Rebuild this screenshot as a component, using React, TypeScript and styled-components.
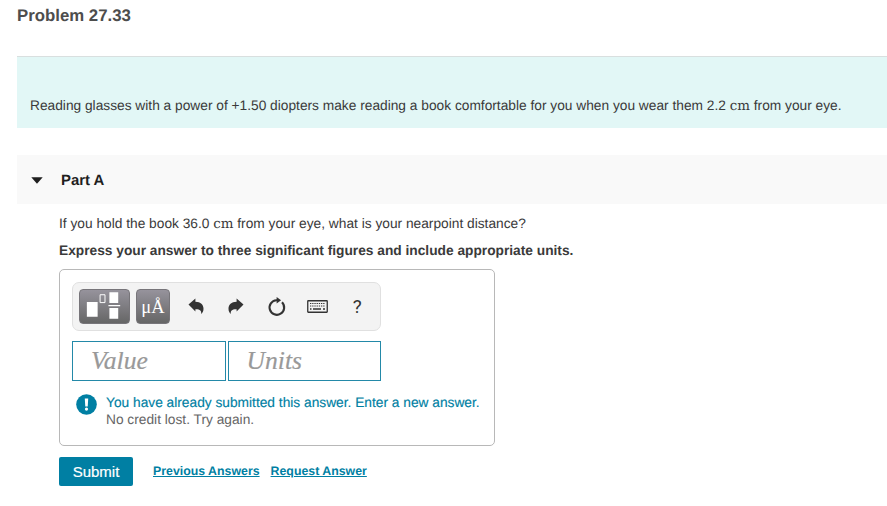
import React, {useState} from 'react';
import styled, {createGlobalStyle} from "styled-components";


//styles
const GlobalStyle = createGlobalStyle`
  * {
    box-sizing: border-box;
  }

  body {
    margin: 0;
    background: white;
    color: #3a3a3a;
    font-family: "Liberation Sans", Arial, sans-serif;
    font-size: 13.74px;
    text-rendering: geometricPrecision;
    overflow: hidden;
  }
`
const Page = styled.main`
  height: 506px;
  padding-left: 17px;
  overflow: hidden;
  white-space: nowrap;
`
const Title = styled.h1`
  margin: 0;
  height: 56px;
  padding-top: 6px;
  font-size: 16.8px;
  line-height: 20px;
  color: #4d4d4d;
`
const Intro = styled.section`
  height: 72px;
  padding: 39px 0 0 13px;
  border-top: 1px solid #d9dfdf;
  background: #e2f7f6;
  line-height: 20px;
`
const Unit = styled.span`
  font-family: "DejaVu Serif", serif;
  font-size: 13.4px;
  line-height: 1;
`
const PartHeader = styled.header`
  display: flex;
  align-items: center;
  gap: 18px;
  height: 49px;
  margin-top: 27px;
  padding: 1px 0 0 14px;
  background: #f9f9f9;
`
const PartTitle = styled.h2`
  margin: 0;
  padding-top: 2px;
  font-size: 14.9px;
  color: #1f1f1f;
`
const PartBody = styled.section`
  padding: 10px 0 0 42px;
`
const Line = styled.p<{ $bold?: boolean }>`
  margin: 0 0 7px;
  line-height: 20px;
  font-weight: ${({$bold}) => $bold ? 700 : 400};
`
const AnswerBox = styled.div`
  width: 436px;
  height: 177px;
  margin-top: 8px;
  padding: 12px;
  border: 1px solid #b8b8b8;
  border-radius: 5px;
`
const Toolbar = styled.div`
  display: flex;
  align-items: center;
  width: 309px;
  height: 49px;
  padding-left: 6px;
  border: 1px solid #e0e0e0;
  border-radius: 7px;
  background: #f3f3f3;
`
const PaletteButton = styled.button<{ $width: number }>`
  display: flex;
  align-items: center;
  justify-content: center;
  width: ${({$width}) => $width}px;
  height: 35px;
  margin-right: 6px;
  padding: 0;
  border: 1px solid #77757a;
  border-radius: 4px;
  background: linear-gradient(#96939c, #666);
  color: white;
  font-family: "Liberation Serif", serif;
  font-size: 18.5px;
  line-height: 38px;
`
const ToolButton = styled.button`
  display: flex;
  align-items: center;
  justify-content: center;
  width: 40.3px;
  height: 35px;
  padding: 0;
  border: none;
  background: none;
  color: #333;
  font-family: Roboto, sans-serif;
  font-size: 19px;
`
const Fields = styled.div`
  display: flex;
  gap: 2px;
  margin-top: 10px;
`
const Field = styled.input`
  width: 153.5px;
  height: 40px;
  padding: 0 18px;
  border: 1px solid #2389a8;
  border-radius: 0;
  outline: none;
  background: white;
  font: italic 25.6px/38px "Liberation Serif", serif;

  &::placeholder {
    color: #999;
    opacity: 1;
    -webkit-text-stroke: 0.2px #999;
  }
`
const Feedback = styled.div`
  display: flex;
  gap: 9px;
  margin-top: 13px;
  padding-left: 4px;
  line-height: 17px;
`
const FeedbackTitle = styled.div`
  color: #007fa3;
  -webkit-text-stroke: 0.15px #007fa3;
`
const FeedbackText = styled.div`
  color: #666;
`
const Actions = styled.div`
  display: flex;
  align-items: center;
  margin-top: 11px;
`
const SubmitButton = styled.button`
  width: 74px;
  height: 29px;
  margin-right: 20px;
  padding: 0;
  border: none;
  border-radius: 2px;
  background: #007fa3;
  color: white;
  font: 15px "Liberation Sans", Arial, sans-serif;
  -webkit-text-stroke: 0.2px white;
`
const ActionLink = styled.a`
  margin: -2px 11px 0 0;
  color: #007fa3;
  font-size: 12.35px;
  font-weight: 700;
  text-decoration: underline;
`

const TemplateIcon = () => (
    <svg width="50" height="35" viewBox="0 0 50 35" fill="none">
        <path fill="white" d="M7 13h11v15H7zM30 3h9v11h-9zM30 19h9v11h-9zM29 16h12v1.2H29z"/>
        <path stroke="white" strokeWidth="1" d="M20.5 5.5h5v8h-5z"/>
    </svg>
)

const ArrowIcon = ({redo = false}: { redo?: boolean }) => (
    <svg width="16" height="18" viewBox="0 0 16 18" fill="#333">
        <path
            transform={redo ? "translate(16 0) scale(-1 1)" : undefined}
            d="M.5 6.5 7.4.6v3.2c5.3.2 8.1 2.8 8.1 7 0 2.3-.9 4.2-2.3 5.1.5-3.4-1.4-4.9-5.8-4.7v2.2z"
        />
    </svg>
)

const ResetIcon = () => (
    <svg width="20" height="20" viewBox="0 0 20 20" fill="none">
        <path stroke="#333" strokeWidth="2.1" d="M15 5.3A7.3 7.3 0 1 1 9.4 3.2h1.8"/>
        <path fill="#333" d="m9.6 0 4.5 3.2-4.5 3.3z"/>
    </svg>
)

const KeyboardIcon = () => (
    <svg width="21" height="13" viewBox="0 0 21 13" fill="none" stroke="#333">
        <rect x=".75" y=".75" width="19.5" height="11.5" rx=".5" strokeWidth="1.3"/>
        <path strokeDasharray="1.3 .9" d="M3 3.5h15M3 6h15"/>
        <path strokeWidth="1.4" d="M3 9h1.5M6 9h8M16 9h2"/>
    </svg>
)

const AlertIcon = () => (
    <svg width="21" height="21" viewBox="0 0 21 21">
        <circle cx="10.5" cy="10.5" r="10.3" fill="#007fa3"/>
        <path fill="white" d="M8.8 4.5h3.4l-.5 8H9.3z"/>
        <circle cx="10.5" cy="15.1" r="1.6" fill="white"/>
    </svg>
)

const App = () => {
    const [value, setValue] = useState<string>("")
    const [units, setUnits] = useState<string>("")
    return (
        <Page>
            <GlobalStyle/>
            <Title>Problem 27.33</Title>
            <Intro>
                Reading glasses with a power of +1.50 diopters make reading a book comfortable
                for you when you wear them 2.2 <Unit>cm</Unit> from your eye.
            </Intro>
            <PartHeader>
                <svg width="12" height="7" viewBox="0 0 12 7">
                    <path fill="#1f1f1f" d="M.3.3h11.4L6 6.7z"/>
                </svg>
                <PartTitle>Part A</PartTitle>
            </PartHeader>
            <PartBody>
                <Line>If you hold the book 36.0 <Unit>cm</Unit> from your eye, what is your nearpoint distance?</Line>
                <Line $bold>Express your answer to three significant figures and include appropriate units.</Line>
                <AnswerBox>
                    <Toolbar>
                        <PaletteButton $width={51}><TemplateIcon/></PaletteButton>
                        <PaletteButton $width={34}>μÅ</PaletteButton>
                        <ToolButton><ArrowIcon/></ToolButton>
                        <ToolButton><ArrowIcon redo/></ToolButton>
                        <ToolButton><ResetIcon/></ToolButton>
                        <ToolButton><KeyboardIcon/></ToolButton>
                        <ToolButton>?</ToolButton>
                    </Toolbar>
                    <Fields>
                        <Field placeholder="Value" value={value} onChange={e => setValue(e.target.value)}/>
                        <Field placeholder="Units" value={units} onChange={e => setUnits(e.target.value)}/>
                    </Fields>
                    <Feedback>
                        <AlertIcon/>
                        <div>
                            <FeedbackTitle>You have already submitted this answer. Enter a new answer.</FeedbackTitle>
                            <FeedbackText>No credit lost. Try again.</FeedbackText>
                        </div>
                    </Feedback>
                </AnswerBox>
                <Actions>
                    <SubmitButton>Submit</SubmitButton>
                    <ActionLink>Previous Answers</ActionLink>
                    <ActionLink>Request Answer</ActionLink>
                </Actions>
            </PartBody>
        </Page>
    )
};

export default App;
